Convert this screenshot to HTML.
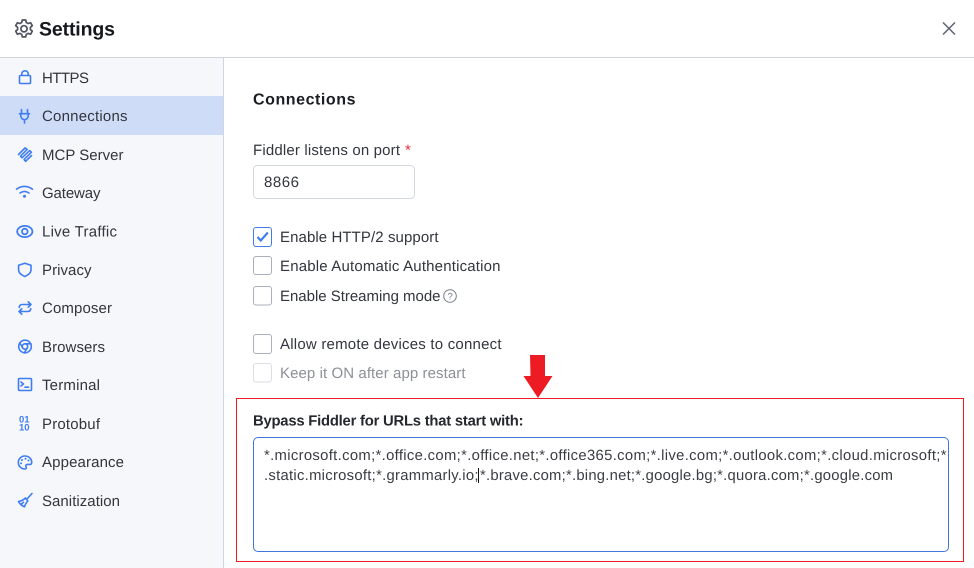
<!DOCTYPE html>
<html><head><meta charset="utf-8"><title>Settings</title>
<style>
html,body{margin:0;padding:0;background:#fff;width:974px;height:568px;overflow:hidden}
svg{display:block}
text{font-family:"Liberation Sans",sans-serif;font-size:15px;fill:#33363e;text-rendering:geometricPrecision}
.n{font-size:15px}
.i{fill:none;stroke:#3f7cf2;stroke-width:1.6;stroke-linecap:round;stroke-linejoin:round}
.c{fill:#fff;stroke:#a9afbd;stroke-width:1}
</style></head><body>
<svg width="974" height="568" viewBox="0 0 974 568" xmlns="http://www.w3.org/2000/svg">
<rect width="974" height="568" fill="#fff"/>
<rect x="0" y="58" width="223" height="510" fill="#f6f7fa"/>
<rect x="0" y="57" width="974" height="1" fill="#d0d4e0"/>
<rect x="223" y="57" width="1" height="511" fill="#d0d4e0"/>
<rect x="0" y="96" width="223" height="39" fill="#cfdcf7"/>

<!-- gear -->
<g fill="none" stroke="#50545f" stroke-width="1.7" stroke-linejoin="round">
<path d="M22.300 20h3.400l.6 2.500 1.900 1 2.400-.8 1.700 3-1.900 1.600v2.300l1.900 1.600-1.700 3-2.400-.8-1.900 1-.6 2.500h-3.400l-.6-2.500-1.900-1-2.400.8-1.700-3 1.900-1.600v-2.300l-1.900-1.600 1.700-3 2.400.8 1.900-1z"/>
<circle cx="24" cy="28.800" r="3.100"/>
</g>
<text x="39" y="35.500" textLength="76" style="font-size:19.500px;font-weight:700;fill:#16181d">Settings</text>
<path d="M943 22.500l12 12M955 22.500l-12 12" stroke="#5d6170" stroke-width="1.500" fill="none"/>

<!-- nav icons -->
<g class="i">
<rect x="19.500" y="75.500" width="11" height="8" rx="1"/><path d="M21.800 75.300v-1.300a3.200 3.200 0 0 1 6.400 0v1.300"/>
<path d="M21.500 109.500v4M27.500 109.500v4M19.500 113.700h10M20.800 113.700v2.300a3.700 3.700 0 0 0 7.400 0v-2.300M24.500 119.700v3.300"/>
<path d="M18.500 154.500l6.500-6.500 2.200 1.300-6.700 6.900 1.600 1.600 7.500-7.200 1.800 1.600-7.300 7.400 1.500 1.700 6-5.800"/>
<path d="M16.500 189.200c4.800-3.700 11.200-3.700 16 0M20 193c2.800-2 6.200-2 9 0"/>
<ellipse cx="24.800" cy="231.500" rx="7.600" ry="5.600" stroke-width="1.800"/><circle cx="24.800" cy="231.500" r="2.800" stroke-width="1.800"/>
<path d="M24.800 263.200l6.200 2v4.800c0 3-2.600 5-6.200 6.500-3.600-1.500-6.200-3.500-6.200-6.500v-4.800z"/>
<path d="M19.300 307.500c0-1.900 1-3 3-3h8.700M28.200 301.800l2.800 2.700-2.800 2.700M30.700 308.500c0 1.900-1 3-3 3h-8.700M21.800 308.800l-2.800 2.700 2.800 2.700"/>
<circle cx="25" cy="346.500" r="6.300"/><circle cx="25" cy="346.500" r="2.700"/><path d="M25 343.800h6M22.700 347.900l-3-5.100M27.300 347.900l-3 5"/>
<rect x="18.500" y="378.500" width="13" height="12" rx="1"/><path d="M21 382l2.500 2-2.500 2M25 387.200h3.500"/>
<path d="M18.500 501.500c2.600-.3 5-1.600 7-3.500l2.300 3c-1.700 2-2.900 4.200-3.300 5.800-2.300-.9-4.800-3-6-5.300zM27 499l5-5.500M21.500 504l2-1.800"/>
<path d="M24.800 456a6.500 6.500 0 0 0 0 13c1.600 0 1.800-1.200 1.200-2.200-.7-1.200.1-2.400 1.500-2.400h2.300c1.300 0 1.900-.9 1.900-2.200 0-3.400-3-6.200-6.900-6.200z"/>
</g>
<g fill="#3f7cf2"><circle cx="24.500" cy="196.300" r="1.500"/><circle cx="22" cy="460" r="1"/><circle cx="25.500" cy="458.800" r="1"/><circle cx="28.500" cy="460.500" r="1"/><circle cx="21" cy="463.300" r="1"/></g>
<text x="19" y="422.500" style="font-size:9.500px;font-weight:700;fill:#3f7cf2">01</text>
<text x="19" y="430.300" style="font-size:9.500px;font-weight:700;fill:#3f7cf2">10</text>

<!-- nav text -->
<text class="n" x="42" y="83" textLength="47">HTTPS</text>
<text class="n" x="42" y="121" textLength="85.500">Connections</text>
<text class="n" x="42" y="160" textLength="81.500">MCP Server</text>
<text class="n" x="42" y="198" textLength="58.500">Gateway</text>
<text class="n" x="42" y="236.500" textLength="75">Live Traffic</text>
<text class="n" x="42" y="275" textLength="49.500">Privacy</text>
<text class="n" x="42" y="313" textLength="70">Composer</text>
<text class="n" x="42" y="352" textLength="63">Browsers</text>
<text class="n" x="42" y="390" textLength="58">Terminal</text>
<text class="n" x="42" y="429" textLength="58">Protobuf</text>
<text class="n" x="42" y="467" textLength="82">Appearance</text>
<text class="n" x="42" y="506" textLength="78">Sanitization</text>

<!-- main -->
<text x="253" y="104.500" textLength="102.500" style="font-size:16px;font-weight:700;fill:#1b1d22">Connections</text>
<text x="253" y="155" textLength="147">Fiddler listens on port</text>
<text x="405" y="155" style="fill:#e8293b">*</text>
<rect x="253.500" y="165.500" width="161" height="33" rx="4" fill="#fff" stroke="#d3d7e0"/>
<text x="264" y="187" textLength="35">8866</text>

<rect class="c" x="253.500" y="227.500" width="18" height="19" rx="2.500" style="stroke:#3f7cf2"/>
<path d="M257.500 237l3.300 3.500 7-8" fill="none" stroke="#3f7cf2" stroke-width="2.200"/>
<text x="280" y="242" textLength="158.500">Enable HTTP/2 support</text>
<rect class="c" x="253.500" y="256.500" width="18" height="18" rx="2.500"/>
<text x="280" y="271" textLength="220.500">Enable Automatic Authentication</text>
<rect class="c" x="253.500" y="286.500" width="18" height="18.500" rx="2.500"/>
<text x="280" y="301" textLength="160.500">Enable Streaming mode</text>
<circle cx="450" cy="296" r="6.300" fill="none" stroke="#777c88" stroke-width="1"/>
<text x="447.500" y="299.500" style="font-size:9.500px;fill:#777c88">?</text>
<rect class="c" x="253.500" y="334.500" width="18" height="19" rx="2.500"/>
<text x="280" y="349" textLength="221.500">Allow remote devices to connect</text>
<rect class="c" x="253.500" y="363.500" width="18" height="18.500" rx="2.500" style="stroke:#dcdee4"/>
<text x="280" y="378" textLength="185.500" style="fill:#8e9098">Keep it ON after app restart</text>

<!-- arrow -->
<path d="M530 355h15v21h7.500l-14.500 22-14.500-22h7z" fill="#ed1c24"/>
<rect x="236.500" y="398.500" width="727" height="163" fill="none" stroke="#ed1c24" stroke-width="1"/>

<text x="253" y="425.500" textLength="270.500" style="font-size:14.800px;font-weight:700;fill:#25272d">Bypass Fiddler for URLs that start with:</text>
<rect x="253.500" y="437.500" width="695" height="114" rx="4.500" fill="#fff" stroke="#3f76de" stroke-width="1"/>
<text x="264" y="460" textLength="682.500" style="font-size:14.800px;fill:#3b3d44">*.microsoft.com;*.office.com;*.office.net;*.office365.com;*.live.com;*.outlook.com;*.cloud.microsoft;*</text>
<text x="264" y="480" textLength="214.500" style="font-size:14.800px;fill:#3b3d44">.static.microsoft;*.grammarly.io;</text>
<text x="480" y="480" textLength="413" style="font-size:14.800px;fill:#3b3d44">*.brave.com;*.bing.net;*.google.bg;*.quora.com;*.google.com</text>
<rect x="478" y="468" width="1" height="15" fill="#111"/>
</svg>
</body></html>
